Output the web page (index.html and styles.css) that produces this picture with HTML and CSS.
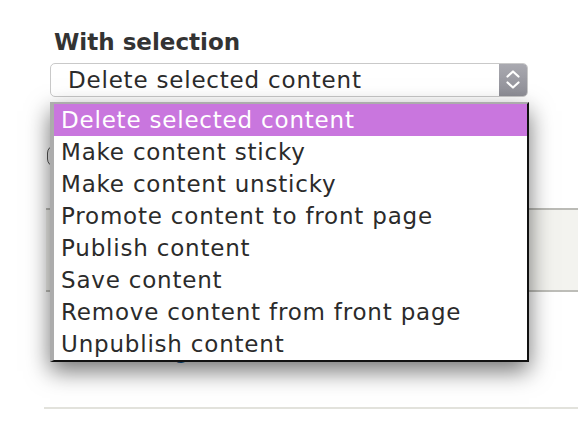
FILE: index.html
```html
<!DOCTYPE html>
<html>
<head>
    <title>Content bulk operations</title>
    <link rel="stylesheet" href="styles.css">
</head>
<body>
    <div class="page">
        <div class="bulk">
            <label class="bulk-label">With selection</label>
            <div class="select-wrap">
                <div class="select">
                    <span class="select-value">Delete selected content</span>
                    <span class="select-arrow">
                        <svg width="28" height="32" viewBox="0 0 28 32">
                            <polyline points="8.5,12.5 14,7.5 19.5,12.5" fill="none" stroke="#fff" stroke-width="2.2" stroke-linecap="round" stroke-linejoin="round"/>
                            <polyline points="8.5,18.5 14,23.5 19.5,18.5" fill="none" stroke="#fff" stroke-width="2.2" stroke-linecap="round" stroke-linejoin="round"/>
                        </svg>
                    </span>
                </div>
                <ul class="dropdown">
                    <li class="option selected">Delete selected content</li>
                    <li class="option">Make content sticky</li>
                    <li class="option">Make content unsticky</li>
                    <li class="option">Promote content to front page</li>
                    <li class="option">Publish content</li>
                    <li class="option">Save content</li>
                    <li class="option">Remove content from front page</li>
                    <li class="option">Unpublish content</li>
                </ul>
            </div>
            <button class="apply" aria-label="Apply"></button>
        </div>

        <div class="content-table">
            <div class="table-head"></div>
            <div class="table-row">
                <a href="#" class="row-link">Latest blog</a>
            </div>
        </div>
    </div>
</body>
</html>
```

FILE: styles.css
```css
body {
    margin: 0;
    background: #fff;
    font-family: "DejaVu Sans", sans-serif;
    color: #333;
    overflow: hidden;
}
.page {
    padding-top: 28px;
}
.bulk {
    padding-left: 50px;
}
.bulk-label {
    display: block;
    padding-left: 4px;
    font-size: 23px;
    font-weight: bold;
    line-height: 28px;
    color: #333;
    margin-bottom: 7px;
}
.select-wrap {
    position: relative;
    width: 478px;
}
.select {
    display: flex;
    align-items: stretch;
    height: 32px;
    border: 1px solid #c9c9c9;
    border-radius: 5px;
    overflow: hidden;
    background: #fff;
}
.select-value {
    flex: 1;
    padding-left: 17px;
    font-size: 23px;
    line-height: 32px;
    letter-spacing: 0.8px;
    color: #2b2b2b;
}
.select-arrow {
    width: 28px;
    background: linear-gradient(#a9a9b0, #8e8e96);
}
.select-arrow svg {
    display: block;
}
.dropdown {
    position: absolute;
    top: calc(100% + 5px);
    left: 0;
    width: 473px;
    margin: 0;
    padding: 0;
    list-style: none;
    background: #fff;
    border-top: 2px solid #acacac;
    border-left: 4px solid #acacac;
    border-right: 2px solid #111;
    border-bottom: 2px solid #111;
    box-shadow: 0 9px 22px rgba(0, 0, 0, 0.55);
    z-index: 10;
}
.option {
    padding-left: 7px;
    font-size: 23px;
    line-height: 32px;
    letter-spacing: 0.8px;
    color: #2b2b2b;
    white-space: nowrap;
}
.option.selected {
    background: #c976de;
    color: #fff;
}
.apply {
    display: block;
    margin: 48px 0 0 -3px;
    width: 90px;
    height: 22px;
    border: 1px solid #555;
    border-radius: 8px;
    background: #f2f2f2;
}
.content-table {
    margin: 41px 0 0 46px;
}
.table-head {
    height: 80px;
    background: #f3f3ef;
    border-top: 2px solid #bbbbb6;
    border-bottom: 2px solid #bdbdb8;
}
.table-row {
    height: 69px;
    padding: 46px 0 0 22px;
    border-bottom: 2px solid #e2e2dc;
    margin-left: -2px;
}
.row-link {
    font-size: 22px;
    line-height: 28px;
    color: #0d5a9c;
    text-decoration: none;
}
```
